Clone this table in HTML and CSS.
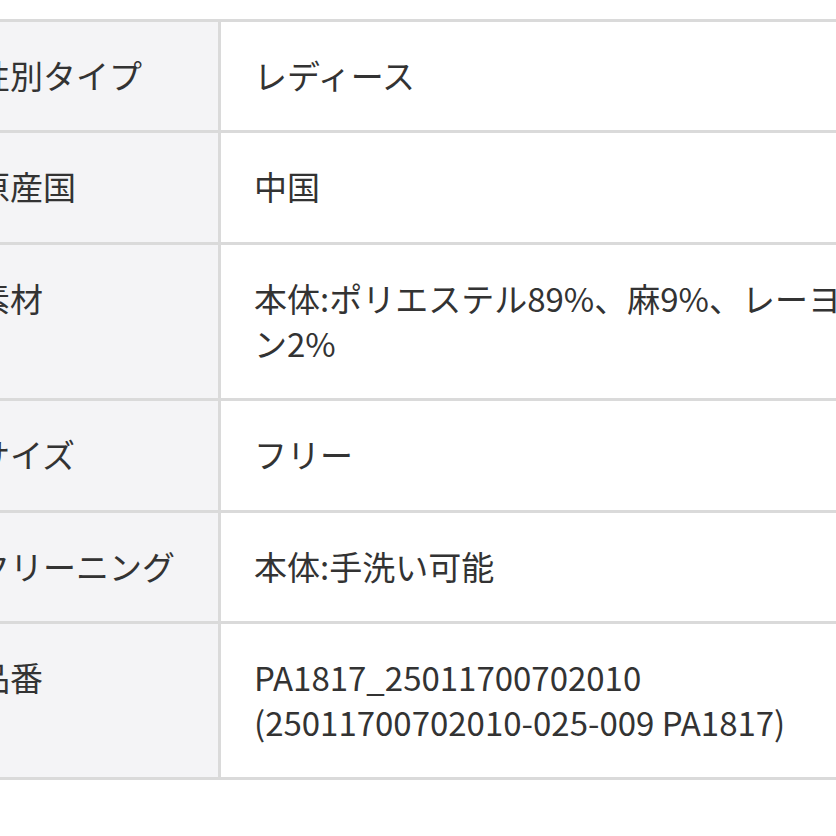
FILE: index.html
```html
<!DOCTYPE html>
<html lang="ja">
<head>
<meta charset="utf-8">
<link rel="stylesheet" href="styles.css">
</head>
<body>
<div class="wrap">
<table class="spec">
<colgroup><col class="c-label"><col class="c-value"></colgroup>
<tbody>
<tr><th>性別タイプ</th><td>レディース</td></tr>
<tr><th>原産国</th><td>中国</td></tr>
<tr><th>素材</th><td>本体:ポリエステル89%、麻9%、レーヨン2%</td></tr>
<tr><th>サイズ</th><td>フリー</td></tr>
<tr><th>クリーニング</th><td>本体:手洗い可能</td></tr>
<tr><th>品番</th><td>PA1817_25011700702010<br>(25011700702010-025-009 PA1817)</td></tr>
</tbody>
</table>
</div>
</body>
</html>
```
FILE: styles.css
```css
html, body {
  margin: 0;
  padding: 0;
  background: #ffffff;
  overflow: hidden;
}
.wrap {
  margin: 19px 0 0 -59px;
  width: 1000px;
}
.spec {
  border-collapse: separate;
  border-spacing: 0;
  table-layout: fixed;
  width: 949px;
  border-top: 3px solid #dadada;
  border-left: 3px solid #dadada;
  font-family: "Noto Sans CJK JP", "Noto Sans", sans-serif;
  font-size: 33px;
  line-height: 45px;
  color: #333333;
}
.c-label { width: 277px; }
.c-value { width: 669px; }
.spec th,
.spec td {
  box-sizing: border-box;
  padding: 31px 33px 32.4px;
  text-align: left;
  vertical-align: top;
  font-weight: 400;
  border-right: 3px solid #dadada;
  border-bottom: 3px solid #dadada;
}
.spec th {
  background: #f4f4f6;
  white-space: nowrap;
}
.spec td {
  background: #ffffff;
}
```
